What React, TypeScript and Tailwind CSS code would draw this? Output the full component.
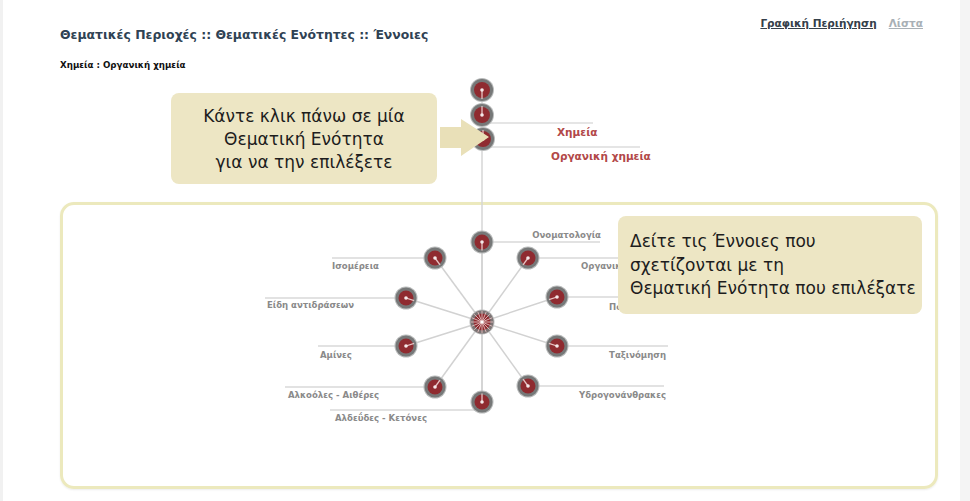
import React from 'react';

type Node = {
  x: number;
  y: number;
  lineFrom: number;
  lineTo: number;
  lineY: number;
  label: string;
  lx: number;
  ly: number;
  anchor: 'start' | 'end';
};

// concept nodes around the hub
const nodes: Node[] = [
  { x: 482, y: 242, lineFrom: 482, lineTo: 600, lineY: 242, label: 'Ονοματολογία', lx: 601, ly: 238, anchor: 'end' },
  { x: 528, y: 258, lineFrom: 528, lineTo: 660, lineY: 258, label: 'Οργανικές ενώσεις', lx: 581, ly: 269, anchor: 'start' },
  { x: 557, y: 297, lineFrom: 557, lineTo: 660, lineY: 297, label: 'Πολυμερή', lx: 609, ly: 310, anchor: 'start' },
  { x: 557, y: 346, lineFrom: 557, lineTo: 668, lineY: 346, label: 'Ταξινόμηση', lx: 666, ly: 358, anchor: 'end' },
  { x: 528, y: 386, lineFrom: 528, lineTo: 664, lineY: 386, label: 'Υδρογονάνθρακες', lx: 666, ly: 398, anchor: 'end' },
  { x: 482, y: 402, lineFrom: 330, lineTo: 482, lineY: 410, label: 'Αλδεΰδες - Κετόνες', lx: 335, ly: 421, anchor: 'start' },
  { x: 435, y: 387, lineFrom: 285, lineTo: 435, lineY: 387, label: 'Αλκοόλες - Αιθέρες', lx: 288, ly: 398, anchor: 'start' },
  { x: 406, y: 346, lineFrom: 318, lineTo: 406, lineY: 346, label: 'Αμίνες', lx: 320, ly: 358, anchor: 'start' },
  { x: 406, y: 298, lineFrom: 265, lineTo: 406, lineY: 298, label: 'Είδη αντιδράσεων', lx: 267, ly: 308, anchor: 'start' },
  { x: 435, y: 258, lineFrom: 332, lineTo: 435, lineY: 258, label: 'Ισομέρεια', lx: 332, ly: 269, anchor: 'start' },
];

const hub = { x: 482, y: 322 };

const Dot = ({ x, y, tx, ty, r = 11.5 }: { x: number; y: number; tx?: number; ty?: number; r?: number }) => {
  let seg = null;
  if (tx !== undefined && ty !== undefined) {
    const dx = tx - x;
    const dy = ty - y;
    const d = Math.sqrt(dx * dx + dy * dy) || 1;
    seg = <line x1={x} y1={y} x2={x + (dx / d) * (r - 3)} y2={y + (dy / d) * (r - 3)} stroke="#e7c4c4" strokeWidth={1.3} />;
  }
  return (
    <g>
      <circle cx={x} cy={y} r={r} fill="#b9bbbb" />
      <circle cx={x} cy={y} r={r - 1} fill="#767878" />
      <circle cx={x} cy={y} r={r - 4} fill="#8f2b30" />
      {seg}
      <circle cx={x} cy={y} r={1.8} fill="#f4e9e9" />
    </g>
  );
};

const Diagram = () => (
  <svg className="absolute left-0 top-0 pointer-events-none" width={970} height={501} viewBox="0 0 970 501">
    {/* chain lines */}
    <line x1={482} y1={90} x2={482} y2={402} stroke="#d6d6d6" strokeWidth={1.5} />
    <line x1={490} y1={123} x2={593} y2={123} stroke="#dcdcdc" strokeWidth={1.5} />
    <line x1={482} y1={147} x2={640} y2={147} stroke="#dcdcdc" strokeWidth={1.5} />

    {/* spokes and label lines */}
    {nodes.map((n, i) => (
      <g key={i}>
        <line x1={hub.x} y1={hub.y} x2={n.x} y2={n.y} stroke="#d2d2d2" strokeWidth={1.5} />
        <line x1={n.lineFrom} y1={n.lineY} x2={n.lineTo} y2={n.lineY} stroke="#d8d8d8" strokeWidth={1.5} />
      </g>
    ))}

    {nodes.map((n, i) => (
      <g key={i}>
        <Dot x={n.x} y={n.y} tx={hub.x} ty={hub.y} />
        <text
          x={n.lx}
          y={n.ly}
          textAnchor={n.anchor}
          fontFamily="'DejaVu Sans Condensed', 'DejaVu Sans', sans-serif"
          fontWeight="bold"
          fontSize={9.5}
          fill="#8a8a8a"
        >
          {n.label}
        </text>
      </g>
    ))}

    {/* hub */}
    <circle cx={hub.x} cy={hub.y} r={12.5} fill="#bcbcbc" />
    <circle cx={hub.x} cy={hub.y} r={11.5} fill="#7c7474" />
    <circle cx={hub.x} cy={hub.y} r={8.5} fill="#8f2b30" />
    {Array.from({ length: 16 }).map((_, i) => {
      const a = (i / 16) * Math.PI * 2;
      return (
        <line
          key={i}
          x1={hub.x}
          y1={hub.y}
          x2={hub.x + Math.cos(a) * 11}
          y2={hub.y + Math.sin(a) * 11}
          stroke="#e2bdbd"
          strokeWidth={0.9}
        />
      );
    })}
    <circle cx={hub.x} cy={hub.y} r={1.6} fill="#ffffff" />

    {/* selected path on top */}
    <Dot x={482} y={90} tx={482} ty={115} r={12} />
    <Dot x={482} y={115} tx={482} ty={90} r={12} />
    <Dot x={483} y={139} tx={483} ty={115} r={12} />

    <text x={557} y={136} fontFamily="'DejaVu Sans', sans-serif" fontWeight="bold" fontSize={10.5} fill="#b24848">
      Χημεία
    </text>
    <text x={551} y={160} fontFamily="'DejaVu Sans', sans-serif" fontWeight="bold" fontSize={10.5} fill="#b24848">
      Οργανική χημεία
    </text>

    {/* arrow pointing to the chain */}
    <polygon points="440,127 461,127 461,119 489,137 461,156 461,148 440,148" fill="#e9e0b8" />
  </svg>
);

const App = () => {
  return (
    <div className="relative flex h-[501px] w-[970px] overflow-hidden bg-white" style={{ fontFamily: "'DejaVu Sans', sans-serif" }}>
      <div className="w-[3px] shrink-0 bg-[#f1f1f1]" />
      <div className="flex flex-1 flex-col pl-[57px] pr-[22px]">
        <div className="flex justify-between">
          <h1 className="mt-[27px] text-[12.4px] font-bold leading-[16px] text-[#2f4254]">
            Θεματικές Περιοχές :: Θεματικές Ενότητες :: Έννοιες
          </h1>
          <div className="mt-[16px] mr-[15px] flex gap-[12px] text-[10.5px] font-bold leading-[14px]">
            <span className="text-[#35404a] underline">Γραφική Περιήγηση</span>
            <span className="text-[#a9b0b6] underline">Λίστα</span>
          </div>
        </div>
        <div className="mt-[16px] text-[8.7px] font-bold leading-[12px] text-[#111]">Χημεία : Οργανική χημεία</div>
        <div className="mt-[131px] h-[287px] rounded-[14px] border-[3px] border-[#ece9bd] shadow-[0_1px_2px_rgba(0,0,0,0.08)]" />
      </div>
      <div className="w-[10px] shrink-0 bg-[#f4f4f4]" />

      <Diagram />

      <div className="absolute left-[171px] top-[93px] h-[91px] w-[266px] rounded-[8px] bg-[#ede6c4] pt-[12px] text-center text-[17px] leading-[23px] text-[#1d1d1d]">
        Κάντε κλικ πάνω σε μία
        <br />
        Θεματική Ενότητα
        <br />
        για να την επιλέξετε
      </div>

      <div className="absolute left-[618px] top-[216px] h-[98px] w-[304px] rounded-[8px] bg-[#ede6c4] pl-[12px] pt-[14px] text-[17px] leading-[23.5px] text-[#1d1d1d]">
        Δείτε τις Έννοιες που
        <br />
        σχετίζονται με τη
        <br />
        Θεματική Ενότητα που επιλέξατε
      </div>
    </div>
  );
};

export default App;
